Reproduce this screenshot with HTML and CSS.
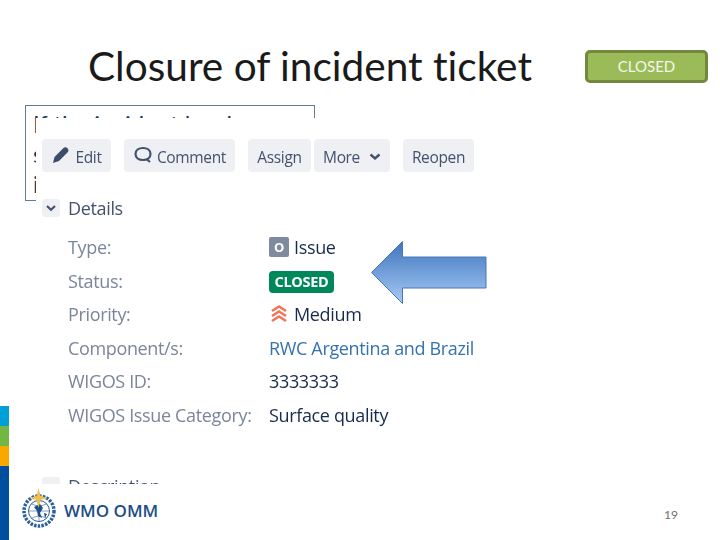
FILE: index.html
```html
<!DOCTYPE html>
<html lang="en">

<head>
    <meta charset="UTF-8">
    <title>Closure of incident ticket</title>
    <link rel="stylesheet" href="styles.css">
</head>

<body>
    <div class="slide">
        <!-- header -->
        <div class="header">
            <h1 class="title">Closure of incident ticket</h1>
            <div class="closed-tag">CLOSED</div>
        </div>

        <!-- text box, mostly hidden by the pasted screenshot -->
        <div class="note">If the incident has been<br>solved, the ticket can be<br>is closed by the user</div>

        <!-- pasted screenshot -->
        <div class="shot">
            <div class="toolbar">
                <div class="btn btn-edit">
                    <svg class="ico" width="20" height="20" viewBox="0 0 20 20">
                        <path d="M2 18l1.500-6L12.500 3c1-1 2.800-1 4 .2s1.200 3 .2 4L8 16z" fill="#3d4c68" />
                    </svg>
                    Edit
                </div>
                <div class="btn btn-comment">
                    <svg class="ico" width="20" height="20" viewBox="0 0 20 20">
                        <path d="M10 3c4.400 0 7.500 2.500 7.500 6s-3.100 6-7.500 6-7.500-2.500-7.500-6 3.100-6 7.500-6zM13.500 14l3.500 3" fill="none" stroke="#42526e" stroke-width="2.200" />
                    </svg>
                    Comment
                </div>
                <div class="btn btn-assign">Assign</div>
                <div class="btn btn-more">
                    More
                    <svg width="12" height="8" viewBox="0 0 12 8">
                        <path d="M1.500 1.500L6 5.500l4.500-4" fill="none" stroke="#42526e" stroke-width="2.400" />
                    </svg>
                </div>
                <div class="btn btn-reopen">Reopen</div>
            </div>

            <div class="section-head">
                <span class="twisty">
                    <svg width="10" height="7" viewBox="0 0 10 7">
                        <path d="M1 1l4 3.800L9 1" fill="none" stroke="#42526e" stroke-width="2.200" />
                    </svg>
                </span>
                Details
            </div>

            <div class="fields">
                <div class="field-label">Type:</div>
                <div class="field-value"><span class="type-ico">O</span>Issue</div>
                <div class="field-label">Status:</div>
                <div class="field-value"><span class="lozenge">CLOSED</span></div>
                <div class="field-label">Priority:</div>
                <div class="field-value">
                    <svg class="prio" width="20" height="20" viewBox="0 0 20 20">
                        <path d="M3 7l7-4.500L17 7M3 12l7-4.500 7 4.500M3 17l7-4.500 7 4.500" fill="none" stroke="#f0765a" stroke-width="2.600" />
                    </svg>
                    Medium
                </div>
                <div class="field-label">Component/s:</div>
                <div class="field-value link">RWC Argentina and Brazil</div>
                <div class="field-label">WIGOS ID:</div>
                <div class="field-value">3333333</div>
                <div class="field-label">WIGOS Issue Category:</div>
                <div class="field-value">Surface quality</div>
            </div>

            <div class="section-head section-desc">
                <span class="twisty"></span>
                Description
            </div>
        </div>

        <!-- arrow pointing at the status -->
        <svg class="arrow" width="118" height="66" viewBox="0 0 118 66">
            <defs>
                <linearGradient id="arrowFill" x1="0" y1="0" x2="0" y2="1">
                    <stop offset="0" stop-color="#3f75bd" />
                    <stop offset="1" stop-color="#a6caf5" />
                </linearGradient>
            </defs>
            <path d="M1.500 32.500L32.500 1.500V17H116V48H32.500V63.500z" fill="url(#arrowFill)" stroke="#4a76b8" />
        </svg>

        <!-- footer -->
        <div class="stripe">
            <div class="stripe-cyan"></div>
            <div class="stripe-green"></div>
            <div class="stripe-orange"></div>
            <div class="stripe-blue"></div>
        </div>
        <div class="logo">
            <svg width="36" height="40" viewBox="0 0 36 40">
                <g fill="none" stroke="#2a5f9e">
                    <circle cx="18" cy="23" r="15" stroke-width="3.500" stroke-dasharray="2.500 1.200" />
                    <circle cx="18" cy="23" r="10.500" stroke-width="1" />
                    <path d="M7.500 23h21M18 12.500v21M10 15.500c5 3 11 3 16 0M10 30.500c5-3 11-3 16 0" stroke-width="0.600" />
                </g>
                <path d="M13 19l6-3 3 4-3 5 2 5-4-2-1-5zM23 25l3 1-2 4z" fill="#1d4f86" />
                <path d="M17.500 0l2 8 7 2-7 2-2 8-2-8-7-2 7-2z" fill="#eec04e" />
            </svg>
            <span class="logo-text">WMO OMM</span>
        </div>
        <div class="page-num">19</div>
    </div>
</body>

</html>
```

FILE: styles.css
```css
/* page */
body {
    margin: 0;
    background: #fff;
}

.slide {
    position: relative;
    width: 720px;
    height: 540px;
    overflow: hidden;
    background: #fff;
}

/* header */
.header {
    display: flex;
    align-items: center;
    padding: 43px 12px 0 88px;
}

.title {
    margin: 0;
    flex: 1;
    font-family: "Lato", "Liberation Sans", sans-serif;
    font-size: 40.600px;
    line-height: 46px;
    font-weight: 400;
    font-variant-ligatures: none;
    color: #1a1a1a;
}

.closed-tag {
    width: 117px;
    height: 27px;
    border: 3px solid #71893f;
    border-radius: 5px;
    background: #9bbb59;
    color: #f4f7ea;
    font-family: "Lato", "Liberation Sans", sans-serif;
    font-size: 15px;
    line-height: 27px;
    text-align: center;
}

/* text box behind the screenshot */
.note {
    position: absolute;
    left: 25px;
    top: 105px;
    width: 281px;
    height: 91px;
    padding: 3px 0 0 7px;
    border: 1px solid #5f7d94;
    background: #fff;
    font-family: "Lato", "Liberation Sans", sans-serif;
    font-size: 24px;
    line-height: 30px;
    color: #17365d;
    white-space: nowrap;
    overflow: hidden;
}

/* pasted screenshot */
.shot {
    position: absolute;
    left: 36px;
    top: 118px;
    width: 454px;
    height: 366px;
    overflow: hidden;
    background: #fff;
    font-family: "Open Sans", "Liberation Sans", sans-serif;
    font-size: 18px;
    color: #172b4d;
    letter-spacing: -0.35px;
    filter: blur(0.5px);
}

.toolbar {
    display: flex;
    padding: 21px 0 0 6px;
}

.btn {
    display: flex;
    align-items: center;
    justify-content: center;
    gap: 4px;
    box-sizing: border-box;
    height: 33px;
    padding-top: 3px;
    border-radius: 4px;
    background: #eef0f3;
    color: #42526e;
    font-size: 15.500px;
}

.ico {
    margin-top: -4px;
}

.btn-edit {
    width: 69px;
    margin-right: 13px;
}

.btn-comment {
    width: 111px;
    margin-right: 13px;
}

.btn-assign {
    width: 63px;
    margin-right: 3px;
}

.btn-more {
    width: 76px;
    gap: 9px;
    margin-right: 13px;
}

.btn-reopen {
    width: 71px;
}

.section-head {
    display: flex;
    align-items: center;
    gap: 8px;
    margin: 26px 0 0 6px;
    height: 20px;
    color: #42526e;
    font-size: 18px;
}

.twisty {
    display: flex;
    align-items: center;
    justify-content: center;
    width: 18px;
    height: 18px;
    border-radius: 3px;
    background: #eef0f3;
}

.fields {
    display: grid;
    grid-template-columns: 201px 1fr;
    grid-auto-rows: 33.500px;
    align-items: center;
    margin: 12.500px 0 0 32px;
}

.field-label {
    color: #7a869a;
}

.field-value {
    display: flex;
    align-items: center;
    gap: 5px;
    color: #172b4d;
}

.link {
    color: #3572b0;
}

.type-ico {
    width: 20px;
    height: 20px;
    border-radius: 2px;
    background: #7f8a9e;
    color: #fff;
    font-size: 13px;
    font-weight: 700;
    line-height: 20px;
    text-align: center;
}

.lozenge {
    margin-top: 2px;
    padding: 0 5.500px;
    height: 22px;
    border-radius: 4px;
    background: #00875a;
    color: #fff;
    font-size: 14.500px;
    font-weight: 700;
    line-height: 22px;
    letter-spacing: -0.3px;
}

.section-desc {
    margin-top: 44px;
}

/* arrow */
.arrow {
    position: absolute;
    left: 370px;
    top: 240px;
}

/* footer */
.stripe {
    position: absolute;
    left: 0;
    top: 406px;
    bottom: 0;
    width: 9px;
    display: flex;
    flex-direction: column;
}

.stripe-cyan {
    height: 20px;
    background: #00a0d6;
}

.stripe-green {
    height: 20px;
    background: #72b744;
}

.stripe-orange {
    height: 20px;
    background: #f9a800;
}

.stripe-blue {
    flex: 1;
    background: #004f9f;
}

.logo {
    position: absolute;
    left: 21px;
    top: 488px;
    display: flex;
    align-items: center;
    gap: 7px;
}

.logo-text {
    margin-top: 5px;
    font-family: "Open Sans", "Liberation Sans", sans-serif;
    font-size: 17px;
    font-weight: 600;
    color: #1d4f86;
}

.page-num {
    position: absolute;
    left: 664px;
    top: 507px;
    font-family: "Lato", "Liberation Sans", sans-serif;
    font-size: 12px;
    color: #6f6f6f;
}
```
